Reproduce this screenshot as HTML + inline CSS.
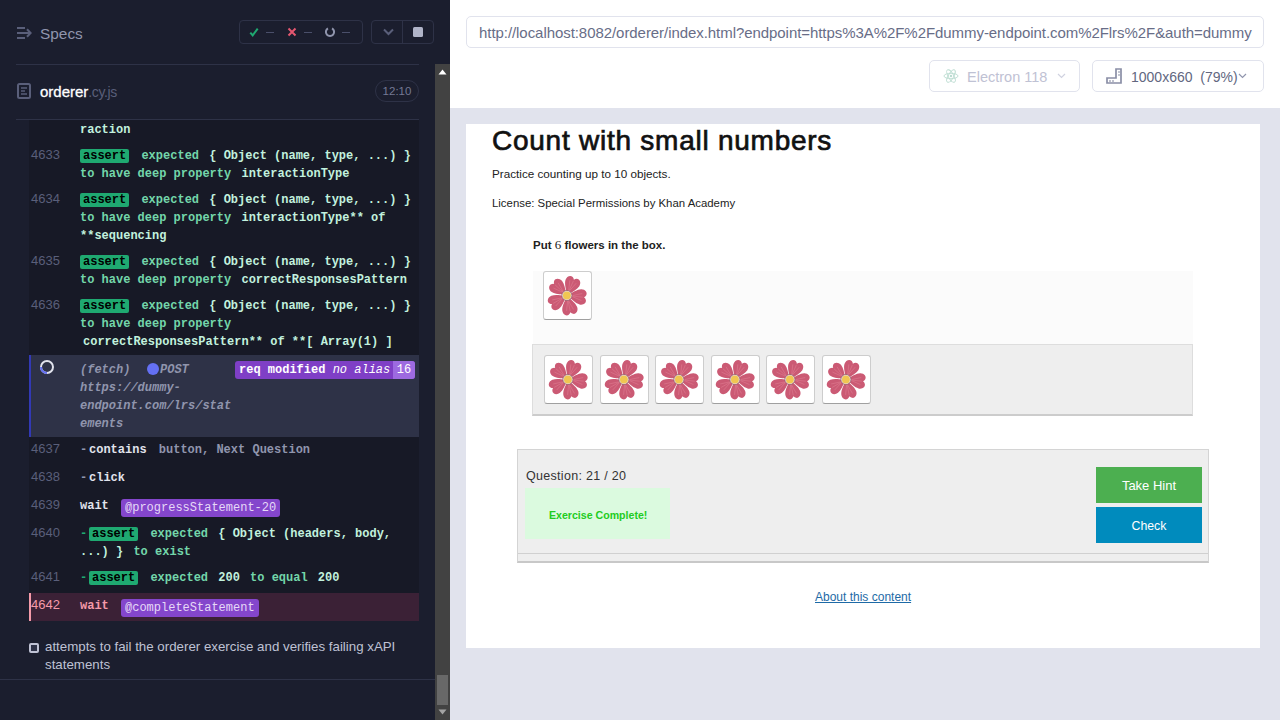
<!DOCTYPE html>
<html><head><meta charset="utf-8">
<style>
*{margin:0;padding:0;box-sizing:border-box}
html,body{width:1280px;height:720px;overflow:hidden;background:#fff;font-family:"Liberation Sans",sans-serif}
.a{position:absolute;white-space:nowrap}
#left{position:absolute;left:0;top:0;width:450px;height:720px;background:#1b1e2e}
#sb{position:absolute;left:435px;top:64px;width:15px;height:656px;background:#424242}
#right{position:absolute;left:450px;top:0;width:830px;height:720px;background:#e1e3ed}
.mono{font-family:"Liberation Mono",monospace;font-size:12px;line-height:18px}
.num{font-family:"Liberation Sans",sans-serif;font-size:13px;color:#5a5f7a;line-height:18px}
.mono{font-weight:bold}
.g{color:#73d6aa}
.v{color:#c2f1de;margin:0 3px}
.v0{color:#c2f1de}
.dash{display:inline-block;width:9px}
.pend{color:#9095ad;font-style:italic}
.badge{display:inline-block;background:#1fa971;color:#000;font-weight:bold;border-radius:2px;padding:0 3px;line-height:14px;margin-right:5px}
.card{position:absolute;width:49px;height:49px;background:#fff;border:1px solid #cdcdcd;border-bottom-color:#a0a0a0;border-radius:3px}
.pb{position:absolute;background:#8446cc;color:#e6d9f7;border-radius:3px;height:18px;line-height:18px;padding:0 4px;font-family:"Liberation Mono",monospace;font-size:12px}
</style></head><body>
<div id="left">
  <!-- header -->
  <svg class="a" style="left:0;top:0" width="40" height="50" viewBox="0 0 40 50">
    <g stroke="#5a5f7a" stroke-width="2" fill="none" stroke-linejoin="miter">
      <path d="M17 28h8M17 38h8M17 33h13M27 29.3l3.6 3.7L27 36.7"/>
    </g>
  </svg>
  <div class="a" style="left:40px;top:24px;font-size:15.4px;line-height:20px;color:#9095ad">Specs</div>

  <div class="a" style="left:239px;top:20px;width:124px;height:24px;border:1px solid #2e3247;border-radius:4px"></div>
  <svg class="a" style="left:249px;top:27px" width="10" height="10" viewBox="0 0 10 10"><path d="M1.3 5.6l2.4 2.8L8.7 1.6" stroke="#1fa971" stroke-width="2" fill="none"/></svg>
  <div class="a" style="left:266px;top:31.5px;width:3.5px;height:1.5px;background:#4a4f6a"></div><div class="a" style="left:270px;top:31.5px;width:3.5px;height:1.5px;background:#4a4f6a"></div>
  <svg class="a" style="left:287px;top:27px" width="10" height="10" viewBox="0 0 10 10"><path d="M1.5 1.5l7 7M8.5 1.5l-7 7" stroke="#e45770" stroke-width="2" fill="none"/></svg>
  <div class="a" style="left:304px;top:31.5px;width:3.5px;height:1.5px;background:#4a4f6a"></div><div class="a" style="left:308px;top:31.5px;width:3.5px;height:1.5px;background:#4a4f6a"></div>
  <svg class="a" style="left:324px;top:26px" width="12" height="12" viewBox="0 0 12 12"><path d="M8.05 2.45A4.1 4.1 0 1 1 3.95 2.45" stroke="#9095ad" stroke-width="2" fill="none"/></svg>
  <div class="a" style="left:342px;top:31.5px;width:3.5px;height:1.5px;background:#4a4f6a"></div><div class="a" style="left:346px;top:31.5px;width:3.5px;height:1.5px;background:#4a4f6a"></div>

  <div class="a" style="left:371px;top:20px;width:63px;height:24px;border:1px solid #2e3247;border-radius:4px"></div>
  <div class="a" style="left:402px;top:20px;width:1px;height:24px;background:#2e3247"></div>
  <svg class="a" style="left:382.6px;top:28px" width="11" height="8" viewBox="0 0 11 8"><path d="M1 1.5l4.5 4.5L10 1.5" stroke="#5a5f7a" stroke-width="2" fill="none"/></svg>
  <div class="a" style="left:413px;top:27px;width:10px;height:10px;background:#b0b4c8;border-radius:1.5px"></div>

  <div class="a" style="left:16px;top:64px;width:403px;height:1px;background:#2e3247"></div>

  <!-- file row -->
  <svg class="a" style="left:17px;top:83px" width="14" height="16" viewBox="0 0 14 16">
    <rect x="1" y="1" width="12" height="14" rx="1.5" stroke="#5a5f7a" stroke-width="2" fill="none"/>
    <path d="M4 5h6M4 8h4M4 11h6" stroke="#5a5f7a" stroke-width="1.5"/>
  </svg>
  <div class="a" style="left:40px;top:83px;font-size:15px;line-height:18px;color:#fff;-webkit-text-stroke:0.3px #fff">orderer<span style="font-size:14px;letter-spacing:-0.4px;color:#5a5f7a;-webkit-text-stroke:0">.cy.js</span></div>
  <div class="a" style="left:375px;top:80px;width:44px;height:22px;border:1px solid #2e3247;border-radius:11px;font-size:11.5px;line-height:20px;color:#747994;text-align:center">12:10</div>

  <div class="a" style="left:16px;top:119px;width:403px;height:1px;background:#2e3247"></div>

  <!-- commands -->
  <div class="a" style="left:29px;top:120px;width:390px;height:501px;background:#171926"></div>

  <div class="a mono v0" style="left:80px;top:121px">raction</div>

  <div class="a num" style="left:31px;top:146px">4633</div>
  <div class="a mono" style="left:80px;top:147px"><span class="badge">assert</span> <span class="g">expected</span> <span class="v">{ Object (name, type, ...) }</span></div>
  <div class="a mono" style="left:80px;top:165px"><span class="g">to have deep property</span> <span class="v">interactionType</span></div>

  <div class="a num" style="left:31px;top:190px">4634</div>
  <div class="a mono" style="left:80px;top:191px"><span class="badge">assert</span> <span class="g">expected</span> <span class="v">{ Object (name, type, ...) }</span></div>
  <div class="a mono" style="left:80px;top:209px"><span class="g">to have deep property</span> <span class="v">interactionType** of</span></div>
  <div class="a mono v0" style="left:80px;top:227px">**sequencing</div>

  <div class="a num" style="left:31px;top:252px">4635</div>
  <div class="a mono" style="left:80px;top:253px"><span class="badge">assert</span> <span class="g">expected</span> <span class="v">{ Object (name, type, ...) }</span></div>
  <div class="a mono" style="left:80px;top:271px"><span class="g">to have deep property</span> <span class="v">correctResponsesPattern</span></div>

  <div class="a num" style="left:31px;top:296px">4636</div>
  <div class="a mono" style="left:80px;top:297px"><span class="badge">assert</span> <span class="g">expected</span> <span class="v">{ Object (name, type, ...) }</span></div>
  <div class="a mono" style="left:80px;top:315px"><span class="g">to have deep property</span></div>
  <div class="a mono" style="left:80px;top:333px"><span class="v">correctResponsesPattern** of **[ Array(1) ]</span></div>

  <!-- pending fetch row -->
  <div class="a" style="left:29px;top:355px;width:390px;height:82px;background:#2e3247;border-left:2px solid #3239b5"></div>
  <svg class="a" style="left:40px;top:360px" width="14" height="14" viewBox="0 0 14 14">
    <circle cx="7" cy="7" r="6" stroke="#e1e3ed" stroke-width="2" fill="none"/>
    <path d="M1 7A6 6 0 0 0 7 13" stroke="#6470f3" stroke-width="2" fill="none"/>
  </svg>
  <div class="a mono pend" style="left:80px;top:361px">(fetch)</div>
  <div class="a" style="left:147px;top:363px;width:12px;height:12px;border-radius:6px;background:#6470f3"></div>
  <div class="a mono pend" style="left:160px;top:361px">POST</div>
  <div class="a mono pend" style="left:80px;top:379px">https://dummy-</div>
  <div class="a mono pend" style="left:80px;top:397px">endpoint.com/lrs/stat</div>
  <div class="a mono pend" style="left:80px;top:415px">ements</div>
  <div class="a" style="left:235px;top:361px;width:180px;height:18px;border-radius:3px;background:#7f3fc6;overflow:hidden">
    <div class="a mono" style="left:4px;top:0;color:#fff"><b>req modified</b> <i style="font-weight:normal">no alias</i></div>
    <div class="a mono" style="left:158px;top:0;width:22px;height:18px;background:#9d6ae0;color:#fff;text-align:center;font-weight:normal">16</div>
  </div>

  <div class="a num" style="left:31px;top:440px">4637</div>
  <div class="a mono" style="left:80px;top:441px"><span class="dash" style="color:#9095ad">-</span><b style="color:#e1e3ed">contains</b> <span class="v" style="color:#9095ad;margin-left:5px">button, Next Question</span></div>

  <div class="a num" style="left:31px;top:468px">4638</div>
  <div class="a mono" style="left:80px;top:469px"><span class="dash" style="color:#9095ad">-</span><b style="color:#e1e3ed">click</b></div>

  <div class="a num" style="left:31px;top:496px">4639</div>
  <div class="a mono" style="left:80px;top:497px"><b style="color:#e1e3ed">wait</b></div>
  <div class="pb" style="left:121px;top:499px">@progressStatement-20</div>

  <div class="a num" style="left:31px;top:524px">4640</div>
  <div class="a mono" style="left:80px;top:525px"><span class="dash" style="color:#1fa971">-</span><span class="badge">assert</span> <span class="g">expected</span> <span class="v">{ Object (headers, body,</span></div>
  <div class="a mono" style="left:80px;top:543px"><span class="v0">...) }</span> <span class="g" style="margin-left:3px">to exist</span></div>

  <div class="a num" style="left:31px;top:568px">4641</div>
  <div class="a mono" style="left:80px;top:569px"><span class="dash" style="color:#1fa971">-</span><span class="badge">assert</span> <span class="g">expected</span> <span class="v">200</span> <span class="g">to equal</span> <span class="v">200</span></div>

  <!-- failed row -->
  <div class="a" style="left:29px;top:593px;width:390px;height:28px;background:#3b2136;border-left:2px solid #f59aa9"></div>
  <div class="a num" style="left:31px;top:596px;color:#f59aa9">4642</div>
  <div class="a mono" style="left:80px;top:597px"><b style="color:#f59aa9">wait</b></div>
  <div class="pb" style="left:121px;top:599px">@completeStatement</div>

  <!-- test title -->
  <div class="a" style="left:29px;top:643px;width:10px;height:10px;border:2px solid #bfc2d4;border-radius:2px;background:#2e3247"></div>
  <div class="a" style="left:45px;top:638px;font-size:13.3px;line-height:18px;color:#bfc2d4">attempts to fail the orderer exercise and verifies failing xAPI<br>statements</div>

  <div class="a" style="left:0;top:679px;width:435px;height:1px;background:#2e3247"></div>
</div>

<div id="sb">
  <svg class="a" style="left:3px;top:5px" width="9" height="6" viewBox="0 0 9 6"><path d="M0.5 5.5L4.5 0.5L8.5 5.5Z" fill="#fff"/></svg>
  <div class="a" style="left:2px;top:611px;width:11px;height:30px;background:#686868"></div>
  <svg class="a" style="left:3px;top:645px" width="9" height="6" viewBox="0 0 9 6"><path d="M0.5 0.5L4.5 5.5L8.5 0.5Z" fill="#a3a3a3"/></svg>
</div>

<div id="right">
  <div class="a" style="left:0;top:0;width:830px;height:108px;background:#fff"></div>
  <div class="a" style="left:16px;top:16px;width:798px;height:32px;border:1px solid #e1e3ed;border-radius:5px"></div>
  <div class="a" style="left:29px;top:24px;font-size:15px;line-height:18px;letter-spacing:-0.06px;color:#686d87">http://localhost:8082/orderer/index.html?endpoint=https%3A%2F%2Fdummy-endpoint.com%2Flrs%2F&amp;auth=dummy</div>

  <div class="a" style="left:479px;top:60px;width:151px;height:32px;border:1px solid #e1e3ed;border-radius:5px"></div>
  <svg class="a" style="left:493px;top:68px" width="16" height="16" viewBox="0 0 16 16">
    <g stroke="#bcdcd1" stroke-width="0.9" fill="none">
      <ellipse cx="8" cy="8" rx="7" ry="2.7"/>
      <ellipse cx="8" cy="8" rx="7" ry="2.7" transform="rotate(60 8 8)"/>
      <ellipse cx="8" cy="8" rx="7" ry="2.7" transform="rotate(120 8 8)"/>
    </g>
    <circle cx="8" cy="8" r="1.2" fill="#bcdcd1"/>
  </svg>
  <div class="a" style="left:517px;top:68px;font-size:14.5px;line-height:18px;color:#bfc2d4">Electron 118</div>
  <svg class="a" style="left:607px;top:73px" width="9" height="6" viewBox="0 0 9 6"><path d="M1 1l3.5 3.5L8 1" stroke="#d0d2e0" stroke-width="1.2" fill="none"/></svg>

  <div class="a" style="left:642px;top:60px;width:172px;height:32px;border:1px solid #e1e3ed;border-radius:5px"></div>
  <svg class="a" style="left:656px;top:68px" width="16" height="16" viewBox="0 0 16 16">
    <path d="M1 15V10H10V1H15V15Z" stroke="#8a8fa6" stroke-width="1.7" fill="none" stroke-linejoin="miter"/>
    <path d="M4 12v2M7 12v2M12 4h2M12 7h2" stroke="#8a8fa6" stroke-width="1.1"/>
  </svg>
  <div class="a" style="left:681px;top:68px;font-size:14px;line-height:18px;color:#62677f;white-space:pre">1000x660  (79%)</div>
  <svg class="a" style="left:788px;top:73px" width="9" height="6" viewBox="0 0 9 6"><path d="M1 1l3.5 3.5L8 1" stroke="#9095ad" stroke-width="1.2" fill="none"/></svg>

  <!-- iframe -->
  <div class="a" id="frame" style="left:16px;top:124px;width:794px;height:524px;background:#fff;overflow:hidden">
    <svg width="0" height="0" style="position:absolute">
      <defs>
        <g id="pt"><path d="M-1.8 -3C-3.5 -5.5 -7 -9.5 -7.6 -13.5C-8.2 -17.5 -5 -20.5 -2.2 -19.2Q-0.8 -18.6 0 -17.2Q0.8 -18.6 2.2 -19.2C5 -20.5 8.2 -17.5 7.6 -13.5C7 -9.5 3.5 -5.5 1.8 -3Z" fill="#cb5a74"/>
          <path d="M0 -4L-3.5 -15M0 -4L0 -16M0 -4L3.5 -15" stroke="#e07e93" stroke-width="0.5" fill="none"/></g>
        <g id="fl">
          <g transform="translate(22.9 23.5)">
            <use href="#pt" transform="rotate(24)"/>
            <use href="#pt" transform="rotate(96)"/>
            <use href="#pt" transform="rotate(168)"/>
            <use href="#pt" transform="rotate(240)"/>
            <use href="#pt" transform="rotate(312)"/>
            <circle r="5.1" fill="#e9dadd" stroke="#8c5a66" stroke-width="0.7"/>
            <circle r="3.9" fill="#f0c652"/>
          </g>
        </g>
      </defs>
    </svg>
    <div class="a" style="left:26px;top:1px;font-size:28px;line-height:32px;-webkit-text-stroke:0.7px #111;letter-spacing:0.75px;color:#111">Count with small numbers</div>
    <div class="a" style="left:26px;top:43px;font-size:11.7px;line-height:14px;color:#222">Practice counting up to 10 objects.</div>
    <div class="a" style="left:26px;top:72px;font-size:11.4px;line-height:14px;color:#222">License: Special Permissions by Khan Academy</div>
    <div class="a" style="left:67px;top:114px;font-size:11.5px;line-height:14px;font-weight:bold;color:#222">Put <span style="font-family:'Liberation Serif',serif;font-weight:normal;font-size:13px">6</span> flowers in the box.</div>
    <div class="a" style="left:67px;top:147px;width:660px;height:73px;background:#fbfbfb"></div>
    <div class="card" style="left:77px;top:147px"><svg width="47" height="47"><use href="#fl"/></svg></div>
    <div class="a" style="left:66px;top:220px;width:661px;height:72px;background:#eee;border:1px solid #ddd;border-bottom:2px solid #ccc"></div>
    <div class="card" style="left:78px;top:231px"><svg width="47" height="47"><use href="#fl"/></svg></div><div class="card" style="left:134px;top:231px"><svg width="47" height="47"><use href="#fl"/></svg></div><div class="card" style="left:189px;top:231px"><svg width="47" height="47"><use href="#fl"/></svg></div><div class="card" style="left:245px;top:231px"><svg width="47" height="47"><use href="#fl"/></svg></div><div class="card" style="left:300px;top:231px"><svg width="47" height="47"><use href="#fl"/></svg></div><div class="card" style="left:356px;top:231px"><svg width="47" height="47"><use href="#fl"/></svg></div>
    <div class="a" style="left:51px;top:325px;width:692px;height:114px;background:#eee;border:1px solid #d4d4d4;border-bottom:2px solid #c8c8c8"></div>
    <div class="a" style="left:52px;top:429px;width:690px;height:1px;background:#d0d0d0"></div>
    <div class="a" style="left:60px;top:345px;font-size:12.5px;line-height:14px;color:#333;letter-spacing:0.3px">Question: 21 / 20</div>
    <div class="a" style="left:59px;top:364px;width:145px;height:51px;background:#dbfadf"></div>
    <div class="a" style="left:83px;top:384px;font-size:10.6px;line-height:14px;font-weight:bold;color:#22cc22">Exercise Complete!</div>
    <div class="a" style="left:630px;top:343px;width:106px;height:36px;background:#4caf50;color:#fff;font-size:13px;line-height:38px;text-align:center">Take Hint</div>
    <div class="a" style="left:630px;top:383px;width:106px;height:36px;background:#008bbd;color:#fff;font-size:12.3px;line-height:38px;text-align:center">Check</div>
    <div class="a" style="left:349px;top:466px;font-size:12px;line-height:14px;color:#1e6aa6;text-decoration:underline">About this content</div>
  </div>
</div>
</body></html>
